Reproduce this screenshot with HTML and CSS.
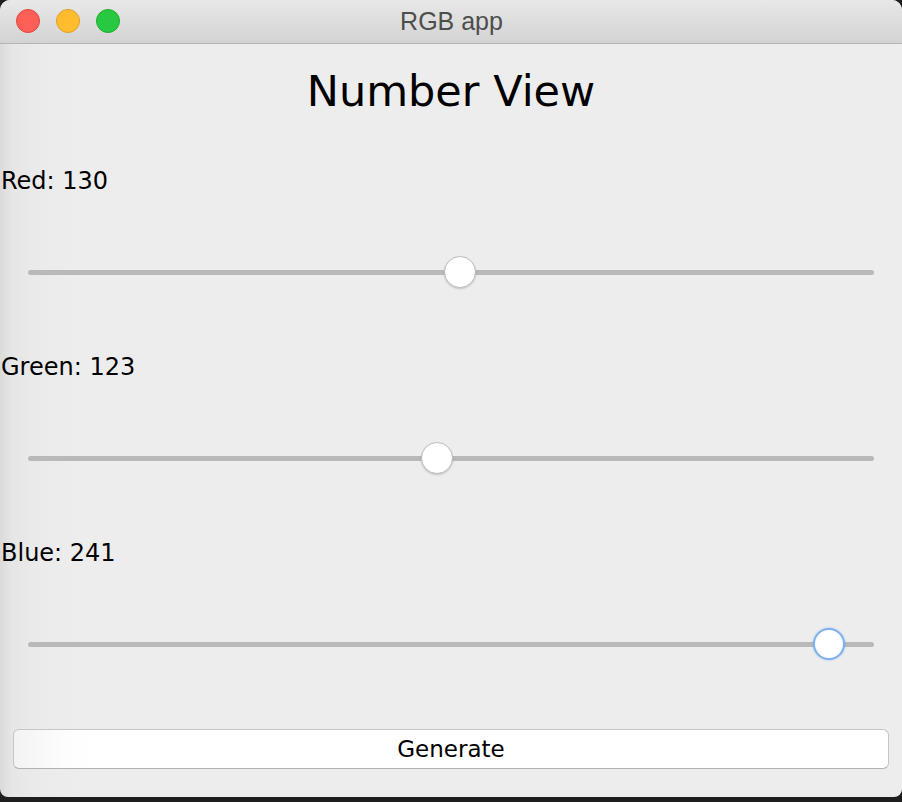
FILE: index.html
```html
<!DOCTYPE html>
<html>
<head>
<meta charset="utf-8">
<title>RGB app</title>
<link rel="stylesheet" href="styles.css">
</head>
<body>
<div class="window">
  <div class="titlebar">
    <div class="lights">
      <span class="light red"></span>
      <span class="light yellow"></span>
      <span class="light green"></span>
    </div>
    <div class="title">RGB app</div>
  </div>
  <div class="content">
    <h1 class="heading">Number View</h1>
    <div class="group">
      <div class="label">Red: 130</div>
      <div class="slider">
        <div class="track"></div>
        <div class="thumb" style="left: 460px"></div>
      </div>
    </div>
    <div class="group">
      <div class="label">Green: 123</div>
      <div class="slider">
        <div class="track"></div>
        <div class="thumb" style="left: 437px"></div>
      </div>
    </div>
    <div class="group">
      <div class="label">Blue: 241</div>
      <div class="slider">
        <div class="track"></div>
        <div class="thumb focused" style="left: 829px"></div>
      </div>
    </div>
    <div class="actions">
      <button class="button">Generate</button>
    </div>
  </div>
</div>
</body>
</html>
```

FILE: styles.css
```css
html, body {
  margin: 0;
  padding: 0;
}
body {
  width: 902px;
  height: 802px;
  background: #1e1e1e;
  overflow: hidden;
  font-family: "DejaVu Sans", "Liberation Sans", sans-serif;
}
.window {
  width: 902px;
  height: 797px;
  border-radius: 10px 10px 8px 8px;
  overflow: hidden;
  background: linear-gradient(to right, #dadada 0px, #e6e6e6 12px, #ebebeb 40px, #ededed 80px);
  display: flex;
  flex-direction: column;
}
.titlebar {
  height: 43px;
  border-bottom: 1px solid #b4b4b4;
  background: linear-gradient(to bottom, #e8e8e8, #d3d3d3);
  position: relative;
  display: flex;
  align-items: center;
  justify-content: center;
  flex-shrink: 0;
}
.lights {
  position: absolute;
  left: 16px;
  top: 9px;
  display: flex;
  gap: 16px;
}
.light {
  width: 22px;
  height: 22px;
  border-radius: 50%;
  border: 1px solid;
  display: block;
}
.light.red { background: #fe5f57; border-color: #e1453f; }
.light.yellow { background: #febc2e; border-color: #dfa024; }
.light.green { background: #28c840; border-color: #1dad2b; }
.title {
  font-family: "Liberation Sans", Arial, sans-serif;
  font-size: 25px;
  color: #4d4d4d;
  padding-left: 1px;
}
.content {
  flex: 1;
  display: flex;
  flex-direction: column;
}
.heading {
  margin: 22px 0 0 0;
  font-size: 43px;
  line-height: 50px;
  font-weight: normal;
  text-align: center;
  color: #000;
  padding-left: 0;
}
.group {
  display: flex;
  flex-direction: column;
  margin-top: 50px;
}
.group + .group {
  margin-top: 60px;
}
.label {
  font-size: 24px;
  line-height: 30px;
  color: #000;
  padding-left: 1px;
}
.slider {
  position: relative;
  height: 40px;
  margin-top: 56px;
}
.track {
  position: absolute;
  left: 28px;
  right: 28px;
  top: 18px;
  height: 5px;
  border-radius: 3px;
  background: #b9b9b9;
}
.thumb {
  position: absolute;
  top: 4px;
  width: 30px;
  height: 30px;
  margin-left: -16px;
  border-radius: 50%;
  background: #fff;
  border: 1px solid #bdbdbd;
  box-shadow: 0 1px 2px rgba(0, 0, 0, 0.18);
}
.thumb.focused {
  width: 28px;
  height: 28px;
  border: 2px solid #7eb1ee;
  box-shadow: 0 0 2px rgba(90, 150, 230, 0.6);
}
.actions {
  margin-top: 65px;
  padding: 0 13px 0 13px;
}
.button {
  width: 100%;
  height: 40px;
  border: 1px solid #c6c6c6;
  border-bottom-color: #b2b2b2;
  border-radius: 6px;
  background: linear-gradient(to right, #f3f3f3 0px, #fdfdfd 50px, #ffffff 80px);
  font-family: "DejaVu Sans", "Liberation Sans", sans-serif;
  font-size: 23px;
  color: #000;
  padding: 0;
  display: block;
}
```
